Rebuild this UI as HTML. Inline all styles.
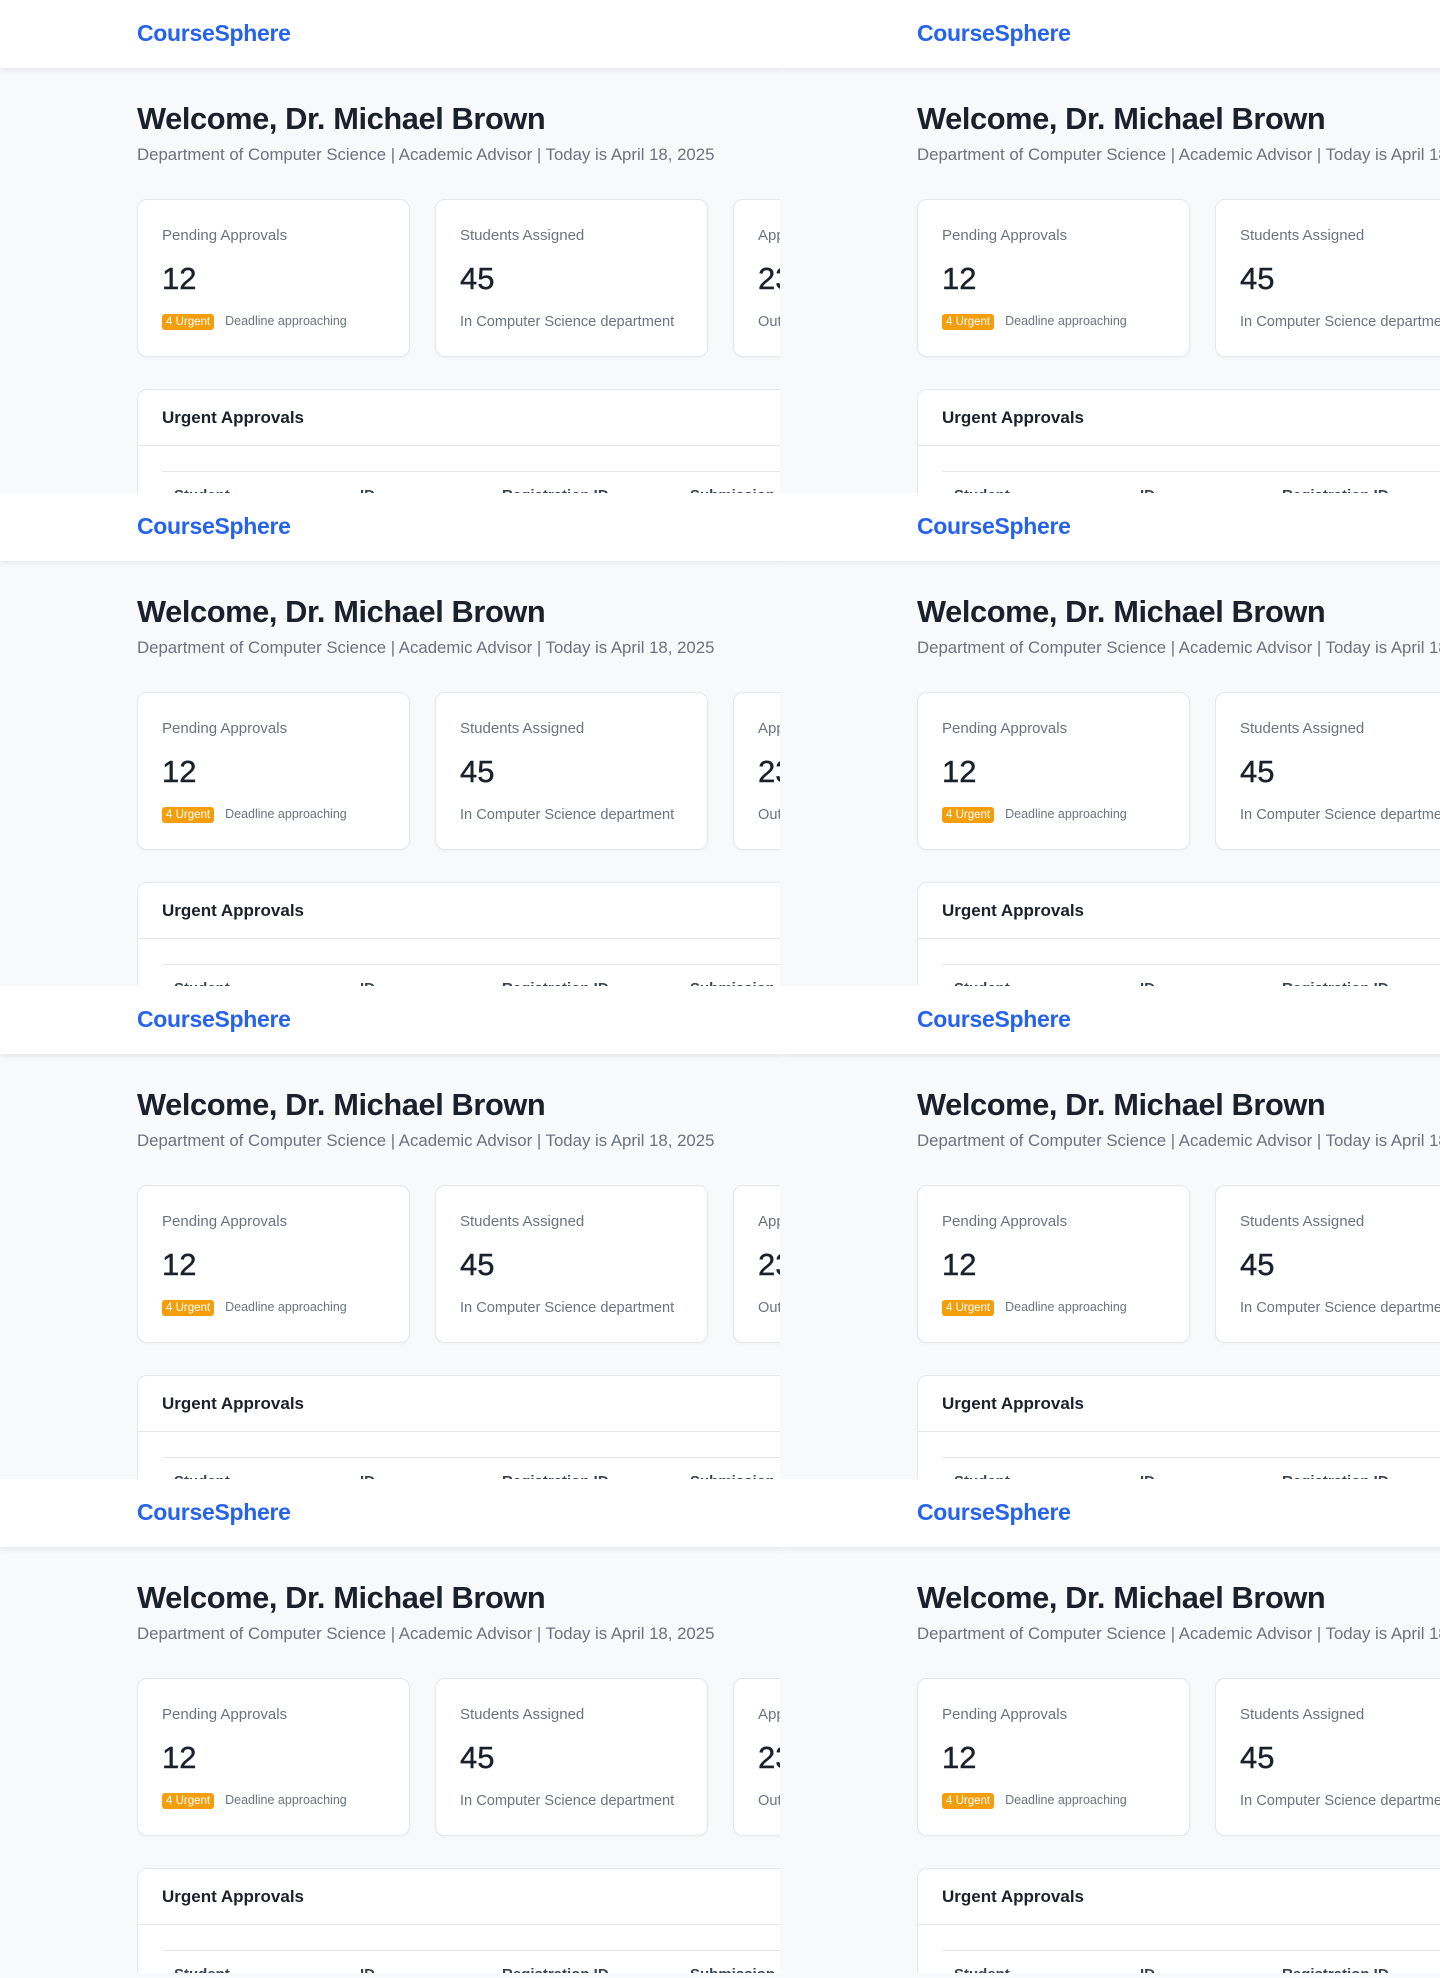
<!DOCTYPE html>
<html><head><meta charset="utf-8"><style>
*{box-sizing:border-box;margin:0;padding:0}
html,body{width:1440px;height:1978px;overflow:hidden}
body{position:relative;background:#f8f9fb;font-family:"Liberation Sans",sans-serif}
.tile{position:absolute;overflow:hidden;background:#f8f9fb}
.page{position:absolute;left:0;top:0;width:1300px;height:600px}
.hdr{position:absolute;left:0;top:0;width:100%;height:68px;background:#fff;box-shadow:0 2px 6px rgba(0,0,0,.08)}
.logo{position:absolute;left:137px;top:20px;font-size:23px;font-weight:bold;color:#2563eb;letter-spacing:-0.3px}
h1{position:absolute;left:137px;top:101px;font-size:30.8px;font-weight:bold;color:#1a202c;letter-spacing:-0.4px;white-space:nowrap}
.sub{position:absolute;left:137px;top:145px;font-size:16.8px;color:#6b7280;white-space:nowrap}
.card{position:absolute;top:199px;width:273px;height:158px;background:#fff;border:1px solid #e5e7eb;border-radius:10px;box-shadow:0 1px 3px rgba(0,0,0,.04)}
.lbl{position:absolute;left:24px;top:27px;font-size:15px;color:#6b7280;white-space:nowrap}
.num{position:absolute;left:24px;top:61px;font-size:31px;color:#1a202c;white-space:nowrap;-webkit-text-stroke:0.4px #1a202c}
.foot{position:absolute;left:24px;top:114px;font-size:14.6px;color:#6b7280;white-space:nowrap}
.badge{display:inline-block;background:#f59e0b;color:#fff;font-size:11.5px;border-radius:3px;padding:1px 4px;margin-right:11px;line-height:14px}
.big{position:absolute;left:137px;top:389px;width:1100px;height:300px;background:#fff;border:1px solid #e5e7eb;border-radius:10px}
.big .t{position:absolute;left:24px;top:18px;font-size:17px;font-weight:bold;color:#1a202c}
.big .l1{position:absolute;left:0;right:0;top:55px;border-top:1px solid #e5e7eb}
.big .l2{position:absolute;left:24px;right:0;top:81px;border-top:1px solid #e5e7eb}
.th{position:absolute;top:97px;font-size:15px;font-weight:bold;color:#374151;white-space:nowrap}
</style></head><body>
<script>
var tpl='<div class="page"><div class="hdr"><div class="logo">CourseSphere</div></div>'+
'<h1>Welcome, Dr. Michael Brown</h1>'+
'<div class="sub">Department of Computer Science | Academic Advisor | Today is April 18, 2025</div>'+
'<div class="card" style="left:137px"><div class="lbl">Pending Approvals</div><div class="num">12</div><div class="foot" style="font-size:12.5px"><span class="badge">4 Urgent</span>Deadline approaching</div></div>'+
'<div class="card" style="left:435px"><div class="lbl">Students Assigned</div><div class="num">45</div><div class="foot">In Computer Science department</div></div>'+
'<div class="card" style="left:733px"><div class="lbl">Approved This Month</div><div class="num">23</div><div class="foot">Out of 35 requests</div></div>'+
'<div class="big"><div class="t">Urgent Approvals</div><div class="l1"></div><div class="l2"></div>'+
'<div class="th" style="left:36px">Student</div><div class="th" style="left:222px">ID</div><div class="th" style="left:364px">Registration ID</div><div class="th" style="left:552px">Submission</div></div></div>';
var rows=[[0,493],[493,493],[986,493],[1479,494]];
var html='';
rows.forEach(function(r){
 html+='<div class="tile" style="left:0;top:'+r[0]+'px;width:780px;height:'+r[1]+'px">'+tpl+'</div>';
 html+='<div class="tile" style="left:780px;top:'+r[0]+'px;width:660px;height:'+r[1]+'px">'+tpl+'</div>';
});
document.write(html);
</script>
</body></html>
